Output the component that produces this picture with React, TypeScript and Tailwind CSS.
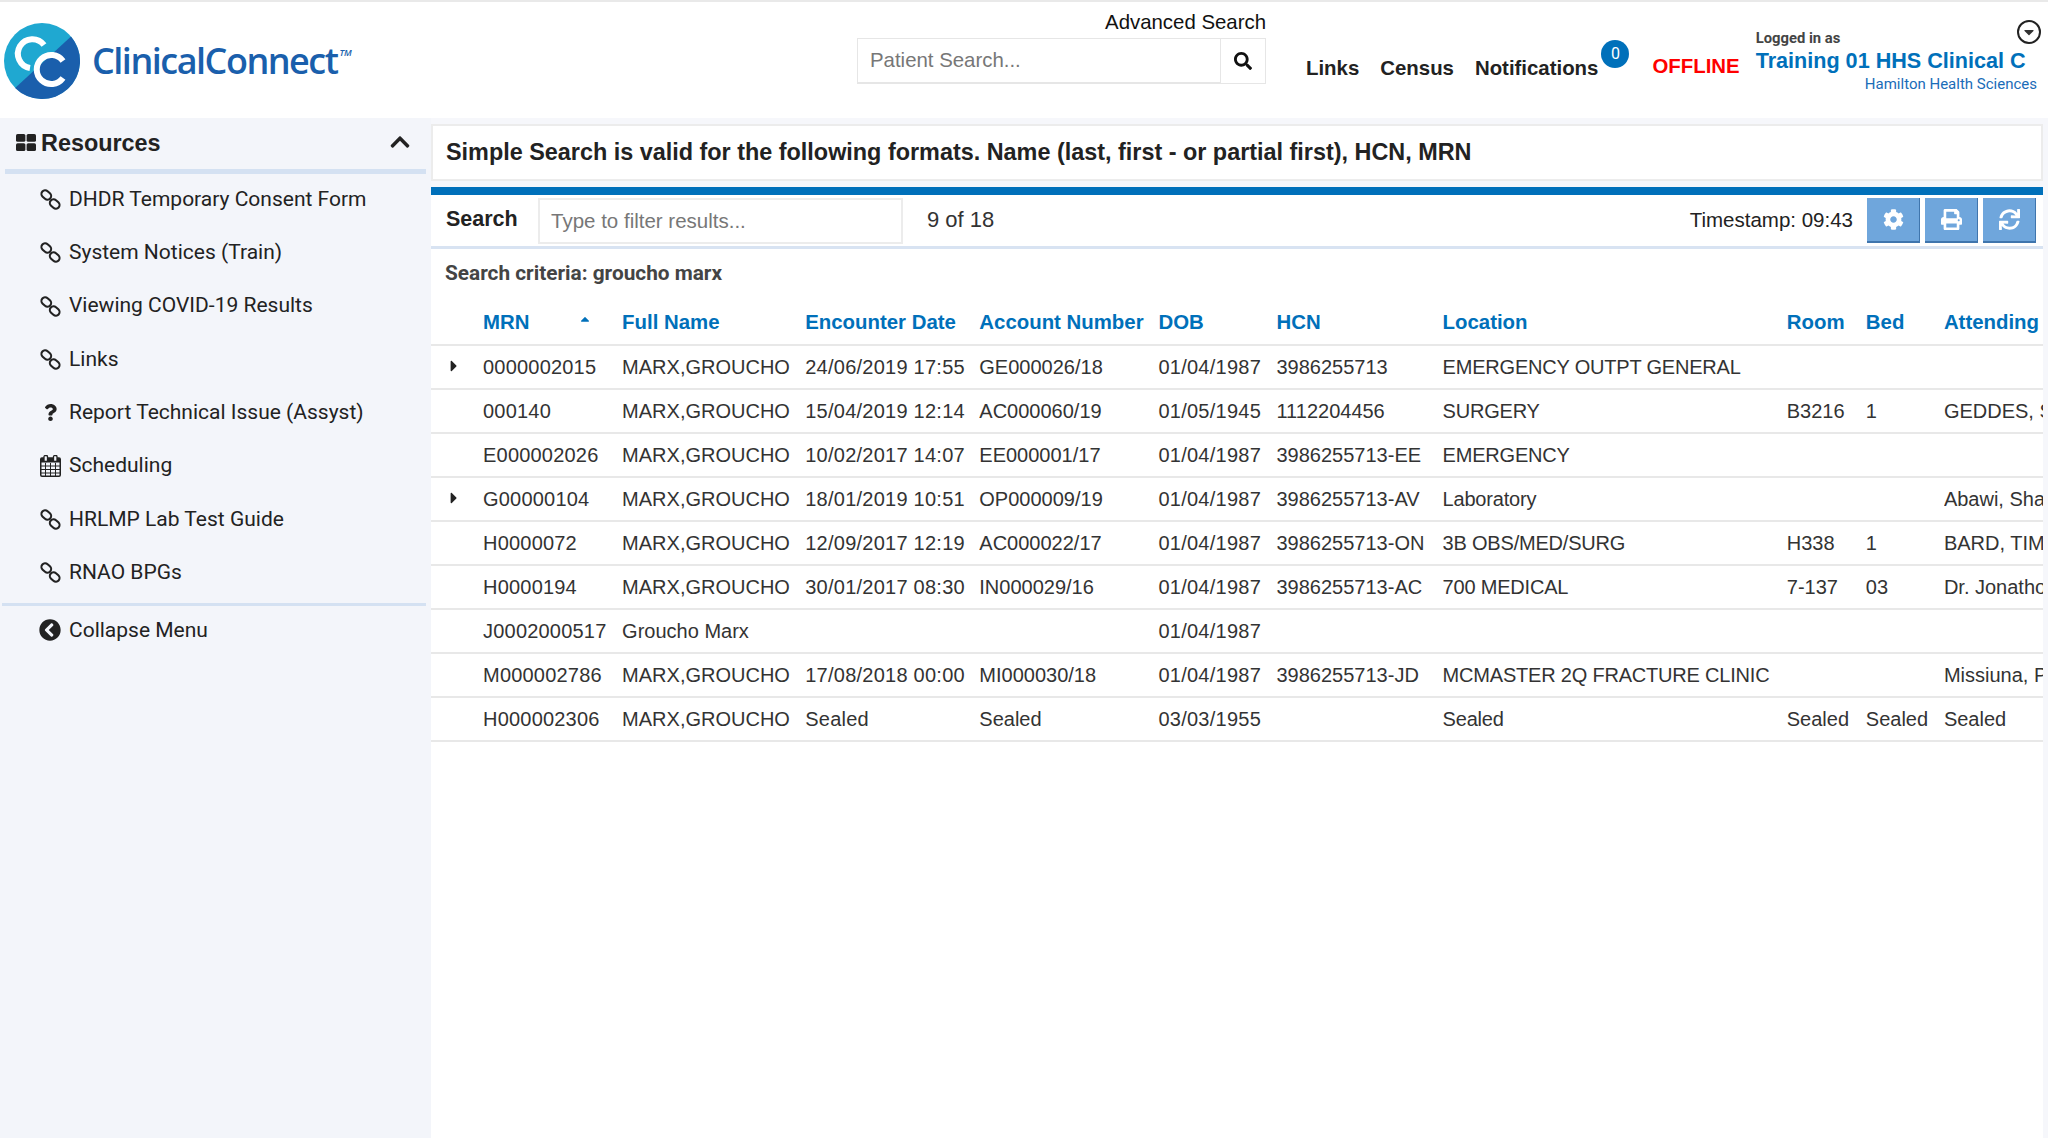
import { FaCaretRight, FaCaretUp, FaCaretDown, FaChevronCircleLeft, FaChevronUp, FaCog, FaPrint, FaQuestion, FaSearch, FaSync } from 'react-icons/fa';

const SANS = "font-['Liberation_Sans',Arial,sans-serif]";

const MENU = [
  { label: 'DHDR Temporary Consent Form', icon: 'link' },
  { label: 'System Notices (Train)', icon: 'link' },
  { label: 'Viewing COVID-19 Results', icon: 'link' },
  { label: 'Links', icon: 'link' },
  { label: 'Report Technical Issue (Assyst)', icon: 'question' },
  { label: 'Scheduling', icon: 'calendar' },
  { label: 'HRLMP Lab Test Guide', icon: 'link' },
  { label: 'RNAO BPGs', icon: 'link' },
];

const COLUMNS = [
  { name: 'MRN', width: 'w-[139px]', cell: 'tracking-[0.2px]' },
  { name: 'Full Name', width: 'w-[183px]', cell: '' },
  { name: 'Encounter Date', width: 'w-[174px]', cell: 'tracking-[0.25px]' },
  { name: 'Account Number', width: 'w-[179px]', cell: '' },
  { name: 'DOB', width: 'w-[118px]', cell: 'tracking-[0.25px]' },
  { name: 'HCN', width: 'w-[166px]', cell: '' },
  { name: 'Location', width: 'w-[344px]', cell: 'tracking-[-0.2px]' },
  { name: 'Room', width: 'w-[79px]', cell: '' },
  { name: 'Bed', width: 'w-[78px]', cell: '' },
  { name: 'Attending', width: 'w-[99px]', cell: '' },
];

const ROWS = [
  { expand: true, cells: ['0000002015', 'MARX,GROUCHO', '24/06/2019 17:55', 'GE000026/18', '01/04/1987', '3986255713', 'EMERGENCY OUTPT GENERAL', '', '', ''] },
  { expand: false, cells: ['000140', 'MARX,GROUCHO', '15/04/2019 12:14', 'AC000060/19', '01/05/1945', '1112204456', 'SURGERY', 'B3216', '1', 'GEDDES, S'] },
  { expand: false, cells: ['E000002026', 'MARX,GROUCHO', '10/02/2017 14:07', 'EE000001/17', '01/04/1987', '3986255713-EE', 'EMERGENCY', '', '', ''] },
  { expand: true, cells: ['G00000104', 'MARX,GROUCHO', '18/01/2019 10:51', 'OP000009/19', '01/04/1987', '3986255713-AV', 'Laboratory', '', '', 'Abawi, Sha'] },
  { expand: false, cells: ['H0000072', 'MARX,GROUCHO', '12/09/2017 12:19', 'AC000022/17', '01/04/1987', '3986255713-ON', '3B OBS/MED/SURG', 'H338', '1', 'BARD, TIM'] },
  { expand: false, cells: ['H0000194', 'MARX,GROUCHO', '30/01/2017 08:30', 'IN000029/16', '01/04/1987', '3986255713-AC', '700 MEDICAL', '7-137', '03', 'Dr. Jonatho'] },
  { expand: false, cells: ['J0002000517', 'Groucho Marx', '', '', '01/04/1987', '', '', '', '', ''] },
  { expand: false, cells: ['M000002786', 'MARX,GROUCHO', '17/08/2018 00:00', 'MI000030/18', '01/04/1987', '3986255713-JD', 'MCMASTER 2Q FRACTURE CLINIC', '', '', 'Missiuna, P'] },
  { expand: false, cells: ['H000002306', 'MARX,GROUCHO', 'Sealed', 'Sealed', '03/03/1955', '', 'Sealed', 'Sealed', 'Sealed', 'Sealed'] },
];

function ChainIcon() {
  return (
    <svg viewBox="0 0 20 20" className="w-[21px] h-[21px]" fill="none" stroke="#222" strokeWidth="2">
      <rect x="1" y="2.2" width="10" height="7" rx="3.5" transform="rotate(42 6 5.7)" />
      <rect x="9" y="10.8" width="10" height="7" rx="3.5" transform="rotate(42 14 14.3)" />
    </svg>
  );
}

function CalendarIcon() {
  return (
    <svg viewBox="0 0 21 22" className="w-[21px] h-[22px]" fill="none" stroke="#222">
      <rect x="0.75" y="3" width="19.5" height="18.25" rx="1.2" strokeWidth="1.5" />
      <rect x="1" y="3" width="19" height="4.5" fill="#222" stroke="none" />
      <rect x="4" y="0.5" width="3.5" height="6" rx="1.2" fill="#f3f5fa" strokeWidth="1.3" />
      <rect x="13.5" y="0.5" width="3.5" height="6" rx="1.2" fill="#f3f5fa" strokeWidth="1.3" />
      <path d="M1 11h19M1 14.5h19M1 18h19M5.5 8v13M10.5 8v13M15.5 8v13" strokeWidth="1" />
    </svg>
  );
}

function GridIcon() {
  return (
    <svg viewBox="0 0 20 17" className="w-[20px] h-[17px] mb-[3px]" fill="#222">
      <rect x="0" y="0" width="9.4" height="7.8" rx="1.6" />
      <rect x="10.6" y="0" width="9.4" height="7.8" rx="1.6" />
      <rect x="0" y="9.2" width="9.4" height="7.8" rx="1.6" />
      <rect x="10.6" y="9.2" width="9.4" height="7.8" rx="1.6" />
    </svg>
  );
}

function MenuIcon({ type }: { type: string }) {
  if (type === 'question') return <FaQuestion className="w-[13px] h-[17px] text-[#222]" />;
  if (type === 'calendar') return <CalendarIcon />;
  return <ChainIcon />;
}

function Logo() {
  return (
    <svg viewBox="0 0 78 78" className="w-[78px] h-[78px] shrink-0">
      <circle cx="39" cy="39" r="38" fill="#1fa8d1" />
      <path d="M12.1 65.9 A38 38 0 0 0 68 14.5 Z" fill="#1a5fac" />
      <path d="M41 23 A14.5 14.5 0 1 0 27 46" fill="none" stroke="#fff" strokeWidth="6" />
      <path d="M60 39 A14.5 14.5 0 1 0 60 56" fill="none" stroke="#fff" strokeWidth="6" />
    </svg>
  );
}

function ToolButton({ children }: { children: React.ReactNode }) {
  return (
    <button className="w-[53px] h-[45px] flex items-center justify-center bg-[#6fa6dc] border-b-2 border-r border-[#3f75ad] text-white text-[21px]">
      {children}
    </button>
  );
}

function Header() {
  return (
    <div className={`h-[118px] flex bg-white border-t-2 border-[#e9e9e9] ${SANS}`}>
      <div className="w-[420px] flex items-center pl-[3px] pt-[1px] gap-[11px]">
        <Logo />
        <div className="flex items-start mt-[1px] text-[#1a5fac] font-['Open_Sans',sans-serif] font-semibold">
          <span className="text-[36px] leading-none tracking-[-1.5px]">ClinicalConnect</span>
          <span className="text-[9px] leading-none italic mt-[5px] ml-[2px]">TM</span>
        </div>
      </div>

      <div className="w-[409px] ml-[437px] shrink-0 flex flex-col">
        <div className="text-[20.4px] leading-[24px] text-right text-[#111] mt-[8px]">Advanced Search</div>
        <div className="flex h-[46px] mt-[4px]">
          <div className="w-[365px] border border-[#e6e6e6] border-b-2 text-[20.4px] text-[#777] pl-[12px] flex items-center">Patient Search...</div>
          <div className="w-[45px] border border-l-0 border-[#e6e6e6] flex items-center justify-center text-[#111] text-[18px]">
            <FaSearch />
          </div>
        </div>
      </div>

      <div className="flex items-start font-bold text-[20.4px] leading-[24px] text-[#222] ml-[40px] pt-[54px] shrink-0 whitespace-nowrap">
        <span>Links</span>
        <span className="ml-[21px]">Census</span>
        <span className="ml-[21px]">Notifications</span>
      </div>
      <div className="relative w-0">
        <div className="absolute left-[3px] top-[38px] w-[28px] h-[28px] rounded-full bg-[#0070ba] text-white text-[16px] flex items-center justify-center font-['Roboto',sans-serif]">0</div>
      </div>
      <div className="ml-[54px] pt-[51px] font-bold text-[20.4px] leading-[26px] text-[#f00] shrink-0">OFFLINE</div>
      <div className="relative ml-[16px] flex-1 min-w-0 mr-[11px] font-['Roboto',sans-serif]">
        <div className="text-[14.8px] leading-[18px] mt-[27px] font-bold text-[#444]">Logged in as</div>
        <div className={`text-[21.6px] leading-[28px] font-bold text-[#0070ba] whitespace-nowrap ${SANS}`}>Training 01 HHS Clinical C</div>
        <div className="text-[15px] leading-[18px] text-right text-[#1a6cb8]">Hamilton Health Sciences</div>
        <div className="absolute right-[-4px] top-[18px] w-[24px] h-[24px] rounded-full border-2 border-[#222] flex items-center justify-center text-[#333] text-[16px]">
          <FaCaretDown />
        </div>
      </div>
    </div>
  );
}

function Sidebar() {
  return (
    <div className="w-[431px] shrink-0 bg-[#f3f5fa] text-[#222] font-['Roboto',sans-serif]">
      <div className={`h-[56px] mx-[5px] flex items-center justify-between border-b-[5px] border-[#d4e1f2] pt-[1px] pl-[11px] pr-[15px] ${SANS}`}>
        <div className="flex items-center gap-[5px] text-[23.4px] font-bold">
          <GridIcon />
          Resources
        </div>
        <FaChevronUp className="w-[22px] h-[22px] mb-[4px]" />
      </div>
      <div className="mt-[-1px] pb-[4px] border-b-[3px] border-[#d4e1f2] mr-[5px] ml-[2px]">
        {MENU.map(item => (
          <div key={item.label} className="h-[53.3px] flex items-center text-[21px] pl-[38px]">
            <div className="w-[21px] flex justify-center mr-[8px]">
              <MenuIcon type={item.icon} />
            </div>
            {item.label}
          </div>
        ))}
      </div>
      <div className="flex items-center h-[48px] text-[21px] pl-[39px]">
        <FaChevronCircleLeft className="w-[22px] h-[22px] mr-[8px]" />
        Collapse Menu
      </div>
    </div>
  );
}

function ResultsTable() {
  return (
    <table className="table-fixed w-full border-collapse text-[20px] text-[#333]">
      <colgroup>
        <col className="w-[52px]" />
        {COLUMNS.map(c => <col key={c.name} className={c.width} />)}
      </colgroup>
      <thead>
        <tr className="h-[44px] border-b-2 border-[#e8e8e8]">
          <th />
          {COLUMNS.map(c => (
            <th key={c.name} className="p-0 text-left text-[20.4px] font-bold text-[#0070ba] whitespace-nowrap">
              {c.name === 'MRN' ? (
                <span className="flex items-center">
                  MRN
                  <FaCaretUp className="text-[#0070ba] w-[14px] h-[14px] ml-[49px] mb-[6px]" />
                </span>
              ) : c.name}
            </th>
          ))}
        </tr>
      </thead>
      <tbody>
        {ROWS.map(row => (
          <tr key={row.cells[0]} className="h-[44px] border-b-2 border-[#e8e8e8]">
            <td className="p-0">
              {row.expand && <FaCaretRight className="w-[16px] h-[18px] ml-[15px] mb-[3px] text-[#222]" />}
            </td>
            {row.cells.map((cell, i) => (
              <td key={i} className={`p-0 whitespace-nowrap overflow-hidden ${COLUMNS[i].cell}`}>{cell}</td>
            ))}
          </tr>
        ))}
      </tbody>
    </table>
  );
}

function Main() {
  return (
    <div className={`flex-1 min-w-0 bg-[#f6f7fb] pt-[6px] pr-[5px] ${SANS}`}>
      <div className="h-[57px] bg-white border-2 border-[#ececec] flex items-center pl-[13px] text-[23.4px] font-bold text-[#222]">
        Simple Search is valid for the following formats. Name (last, first - or partial first), HCN, MRN
      </div>
      <div className="mt-[6px] h-[8px] bg-[#0070ba]" />
      <div className="bg-white h-[calc(100%-71px)]">
        <div className="h-[54px] flex items-center border-b-[3px] border-[#d8e3f2] pl-[15px] pr-[7px]">
          <span className="w-[92px] text-[21.5px] font-bold text-[#222] mb-[3px]">Search</span>
          <div className="w-[365px] h-[46px] border-2 border-[#ececec] text-[20.5px] text-[#777] pl-[11px] flex items-center mt-[1px]">Type to filter results...</div>
          <span className="ml-[24px] text-[22px] text-[#333] mb-[3px]">9 of 18</span>
          <span className="ml-auto text-[20.5px] text-[#222] mr-[14px]">Timestamp: 09:43</span>
          <div className="flex gap-[5px] mb-[1px]">
            <ToolButton><FaCog /></ToolButton>
            <ToolButton><FaPrint /></ToolButton>
            <ToolButton><FaSync /></ToolButton>
          </div>
        </div>
        <div className="h-[50px] pl-[14px] flex items-center text-[20.8px] font-bold text-[#444] font-['Roboto',sans-serif]">Search criteria: groucho marx</div>
        <div className="mt-[2px]"><ResultsTable /></div>
      </div>
    </div>
  );
}

export default function App() {
  return (
    <div className="h-[1138px] flex flex-col overflow-hidden bg-white">
      <Header />
      <div className="flex flex-1 min-h-0">
        <Sidebar />
        <Main />
      </div>
    </div>
  );
}
